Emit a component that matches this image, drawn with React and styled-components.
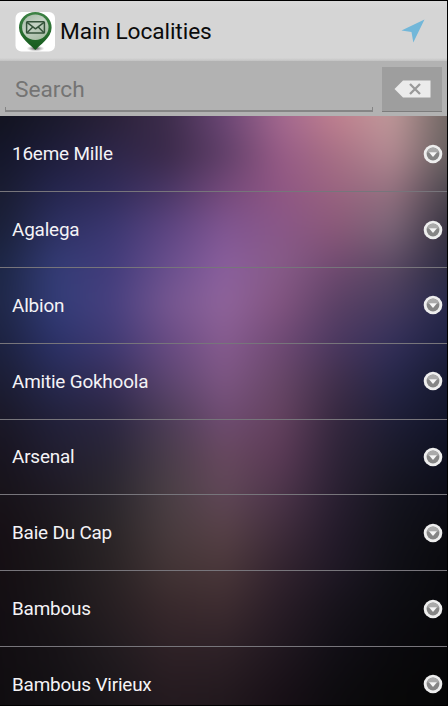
import React from "react";
import styled, { createGlobalStyle } from "styled-components";

const GlobalStyle = createGlobalStyle`
  *, *::before, *::after { box-sizing: border-box; }
  body { margin: 0; background: #000; overflow: hidden; }
`;

const Screen = styled.main`
  display: flex;
  flex-direction: column;
  width: 448px;
  height: 706px;
  padding: 1px 1px 1px 0;
  overflow: hidden;
  background: #000;
  font-family: Roboto, "Liberation Sans", sans-serif;
`;

const TitleBar = styled.header`
  display: flex;
  flex: none;
  align-items: center;
  height: 60px;
  padding: 0 22px 0 15px;
  background: linear-gradient(#d9d9d9, #d5d5d5 8px, #d5d5d5 57px, #c2c2c2 60px);
`;

const AppIcon = styled.svg`
  flex: none;
  width: 41px;
  height: 41px;
`;

const Title = styled.h1`
  flex: 1;
  margin: 1px 0 0 4px;
  color: #0b0b0b;
  font-size: 22.7px;
  font-weight: 400;
  letter-spacing: -0.08px;
  line-height: 30px;
  white-space: nowrap;
`;

const LocateIcon = styled.svg`
  flex: none;
  width: 24px;
  height: 24px;
`;

const SearchBar = styled.div`
  display: flex;
  flex: none;
  justify-content: space-between;
  height: 55.4px;
  padding: 6px 5px 4px;
  background: #b2b2b2;
`;

const SearchField = styled.div`
  display: flex;
  align-items: center;
  width: 368px;
  height: 45px;
  padding: 1px 0 0 10px;
  background:
    linear-gradient(#858585, #858585) left bottom / 1px 5px no-repeat,
    linear-gradient(#858585, #858585) right bottom / 1px 5px no-repeat,
    linear-gradient(#858585, #858585) left bottom / 100% 2px no-repeat;
  color: #747474;
  font-size: 22.7px;
  line-height: 30px;
`;

const ClearButton = styled.button`
  display: flex;
  align-items: center;
  justify-content: center;
  width: 60px;
  height: 45px;
  padding: 0;
  border: 0;
  border-bottom: 1px solid #7c7c7c;
  background: #9e9e9e;
`;

const List = styled.ul`
  position: relative;
  flex: 1;
  min-height: 0;
  margin: 0;
  padding: 0;
  overflow: hidden;
  list-style: none;
`;

const BLEED = 30;

const Wallpaper = styled.li`
  position: absolute;
  inset: -${BLEED}px;
  filter: blur(11px);
`;

/* Each band fades in over the previous one, giving a smooth two-way blend. */
const WallpaperBand = styled.div`
  position: absolute;
  inset: 0;
  background: linear-gradient(to right, ${(p) => p.$stops});
  mask-image: ${(p) =>
    p.$to === 0
      ? "none"
      : `linear-gradient(transparent ${p.$from + BLEED}px, #000 ${p.$to + BLEED}px)`};
`;

const Row = styled.li`
  position: relative;
  display: flex;
  align-items: center;
  justify-content: space-between;
  height: 75.8px;
  padding: 0 4.5px 0 12px;
  border-bottom: 1px solid #77757b;
`;

const RowLabel = styled.span`
  padding-top: 1px;
  color: #f4f3f6;
  font-size: 18.9px;
  letter-spacing: -0.18px;
  line-height: 24px;
  white-space: nowrap;
`;

const RowIcon = styled.svg`
  flex: none;
  width: 20px;
  height: 20px;
`;

const bands = [
  [0, "#12131f #1b1a2c #2a2138 #3d2d4c #6b4675 #a3688f #c0808f #c0999a #6f6663"],
  [38, "#14162a #1f1e3c #2d2649 #3b2a4a #5f3f68 #965b86 #a87085 #b38a92 #66605f"],
  [75, "#191c30 #25264f #312c5a #4a3766 #74497a #8f5683 #9a6480 #957280 #4b464e"],
  [113, "#1a2038 #2d3163 #3b3771 #5d4582 #805692 #895788 #8a5878 #7a6577 #35303f"],
  [151, "#1c2645 #343c76 #423c7b #694f8d #8a5f9d #875b88 #704a70 #5a4963 #2c2b42"],
  [188, "#1f2747 #333d78 #47407f #755690 #8f649b #825480 #5b4165 #473c5e #26284a"],
  [226, "#1c2240 #2c3269 #403a74 #684b83 #875c90 #704a75 #4b3860 #34305a #1e2142"],
  [264, "#1b1d33 #272a52 #372f5a #5c4570 #7d5683 #684768 #41304c #26274a #171a30"],
  [302, "#1a1827 #22213b #2c2743 #4d3d58 #6f4c72 #64425f #36283f #1f1f38 #12152a"],
  [340, "#18141f #211e30 #2a2636 #4a3d4b #68495f #5b3a56 #2f2438 #1a1a2a #0e1020"],
  [378, "#171319 #1f1a23 #2b272e #4a3f44 #604757 #4d354a #2a2032 #15151f #0d0d18"],
  [416, "#160f15 #1d191d #2b2628 #483b3e #574147 #402d3c #241b2b #12121a #0b0b10"],
  [454, "#150f13 #1b171a #2a2325 #423435 #4a373a #33242f #1f1825 #101016 #09090d"],
  [492, "#130e13 #1a1619 #271f22 #38292c #3d2c30 #291d27 #17131b #0d0d12 #08080b"],
  [530, "#120e12 #171317 #211b1f #2f2227 #2f2228 #211820 #120f16 #0b0a0e #070709"],
  [588, "#100d10 #131114 #1a161a #241a1f #21181d #170f16 #0c0b0e #080808 #060607"],
];

const COLUMN = 56;
const toStops = (colors) =>
  colors
    .split(" ")
    .map((color, i) => `${color} ${BLEED + i * COLUMN}px`)
    .join(", ");

const localities = [
  "16eme Mille",
  "Agalega",
  "Albion",
  "Amitie Gokhoola",
  "Arsenal",
  "Baie Du Cap",
  "Bambous",
  "Bambous Virieux",
];

function MailPin() {
  return (
    <AppIcon viewBox="0 0 41 41" aria-hidden="true">
      <defs>
        <linearGradient id="pin" x1="0" y1="0" x2="0" y2="1">
          <stop offset="0" stopColor="#3d8345" />
          <stop offset="1" stopColor="#155a1c" />
        </linearGradient>
        <linearGradient id="lens" x1="0" y1="0" x2="0.6" y2="1">
          <stop offset="0" stopColor="#a2b7a4" />
          <stop offset="0.5" stopColor="#c4d2c4" />
          <stop offset="1" stopColor="#a9bea7" />
        </linearGradient>
        <radialGradient id="shade">
          <stop offset="0" stopColor="#333" stopOpacity="0.9" />
          <stop offset="1" stopColor="#888" stopOpacity="0" />
        </radialGradient>
      </defs>
      <rect x="0.5" y="1" width="39.5" height="39.5" rx="6" fill="#fff" />
      <ellipse cx="20.5" cy="37.5" rx="9" ry="3" fill="url(#shade)" />
      <path
        d="M20.300 39C16.500 34.500 4 27 4 16.800a16.300 15.900 0 0 1 32.600 0C36.600 27 24 34.500 20.300 39Z"
        fill="url(#pin)"
      />
      <ellipse cx="20.3" cy="16.3" rx="13.2" ry="12.7" fill="url(#lens)" />
      <g fill="none" stroke="#35533b" strokeWidth="1.5" strokeLinejoin="round">
        <rect x="11.6" y="10.8" width="17.8" height="11.2" rx="0.8" />
        <path d="M12 11.300l8.500 6.500L29 11.300M12 21.700l6-6M29 21.700l-6-6" />
      </g>
    </AppIcon>
  );
}

function Backspace() {
  return (
    <svg width="37" height="18" viewBox="0 0 37 18" aria-hidden="true">
      <path d="M0.500 9L9 0.500H36.500V17.500H9Z" fill="#ebebeb" />
      <path d="M16 4l10 10M26 4L16 14" stroke="#999" strokeWidth="2.300" />
    </svg>
  );
}

function ExpandIcon() {
  return (
    <RowIcon viewBox="0 0 20 20" aria-hidden="true">
      <circle cx="10" cy="10" r="9.300" fill="#eeeeee" />
      <circle cx="10" cy="10" r="6.400" fill="#858585" />
      <path d="M4 8.500a6.200 6.200 0 0 1 12 0Z" fill="#aaa" />
      <path d="M6 8.300h8L10 13Z" fill="#f7f7f7" />
    </RowIcon>
  );
}

export default function App() {
  return (
    <>
      <GlobalStyle />
      <Screen>
        <TitleBar>
          <MailPin />
          <Title>Main Localities</Title>
          <LocateIcon viewBox="0 0 24 24" aria-label="Locate">
            <path d="M23.500 0.500L0.500 11.600L10.500 13L12.300 23.500Z" fill="#72b7d9" />
          </LocateIcon>
        </TitleBar>
        <SearchBar>
          <SearchField>Search</SearchField>
          <ClearButton aria-label="Clear">
            <Backspace />
          </ClearButton>
        </SearchBar>
        <List>
          <Wallpaper aria-hidden="true">
            {bands.map(([y, colors], i) => (
              <WallpaperBand
                key={y}
                $from={i ? bands[i - 1][0] : 0}
                $to={y}
                $stops={toStops(colors)}
              />
            ))}
          </Wallpaper>
          {localities.map((name) => (
            <Row key={name}>
              <RowLabel>{name}</RowLabel>
              <ExpandIcon />
            </Row>
          ))}
        </List>
      </Screen>
    </>
  );
}
